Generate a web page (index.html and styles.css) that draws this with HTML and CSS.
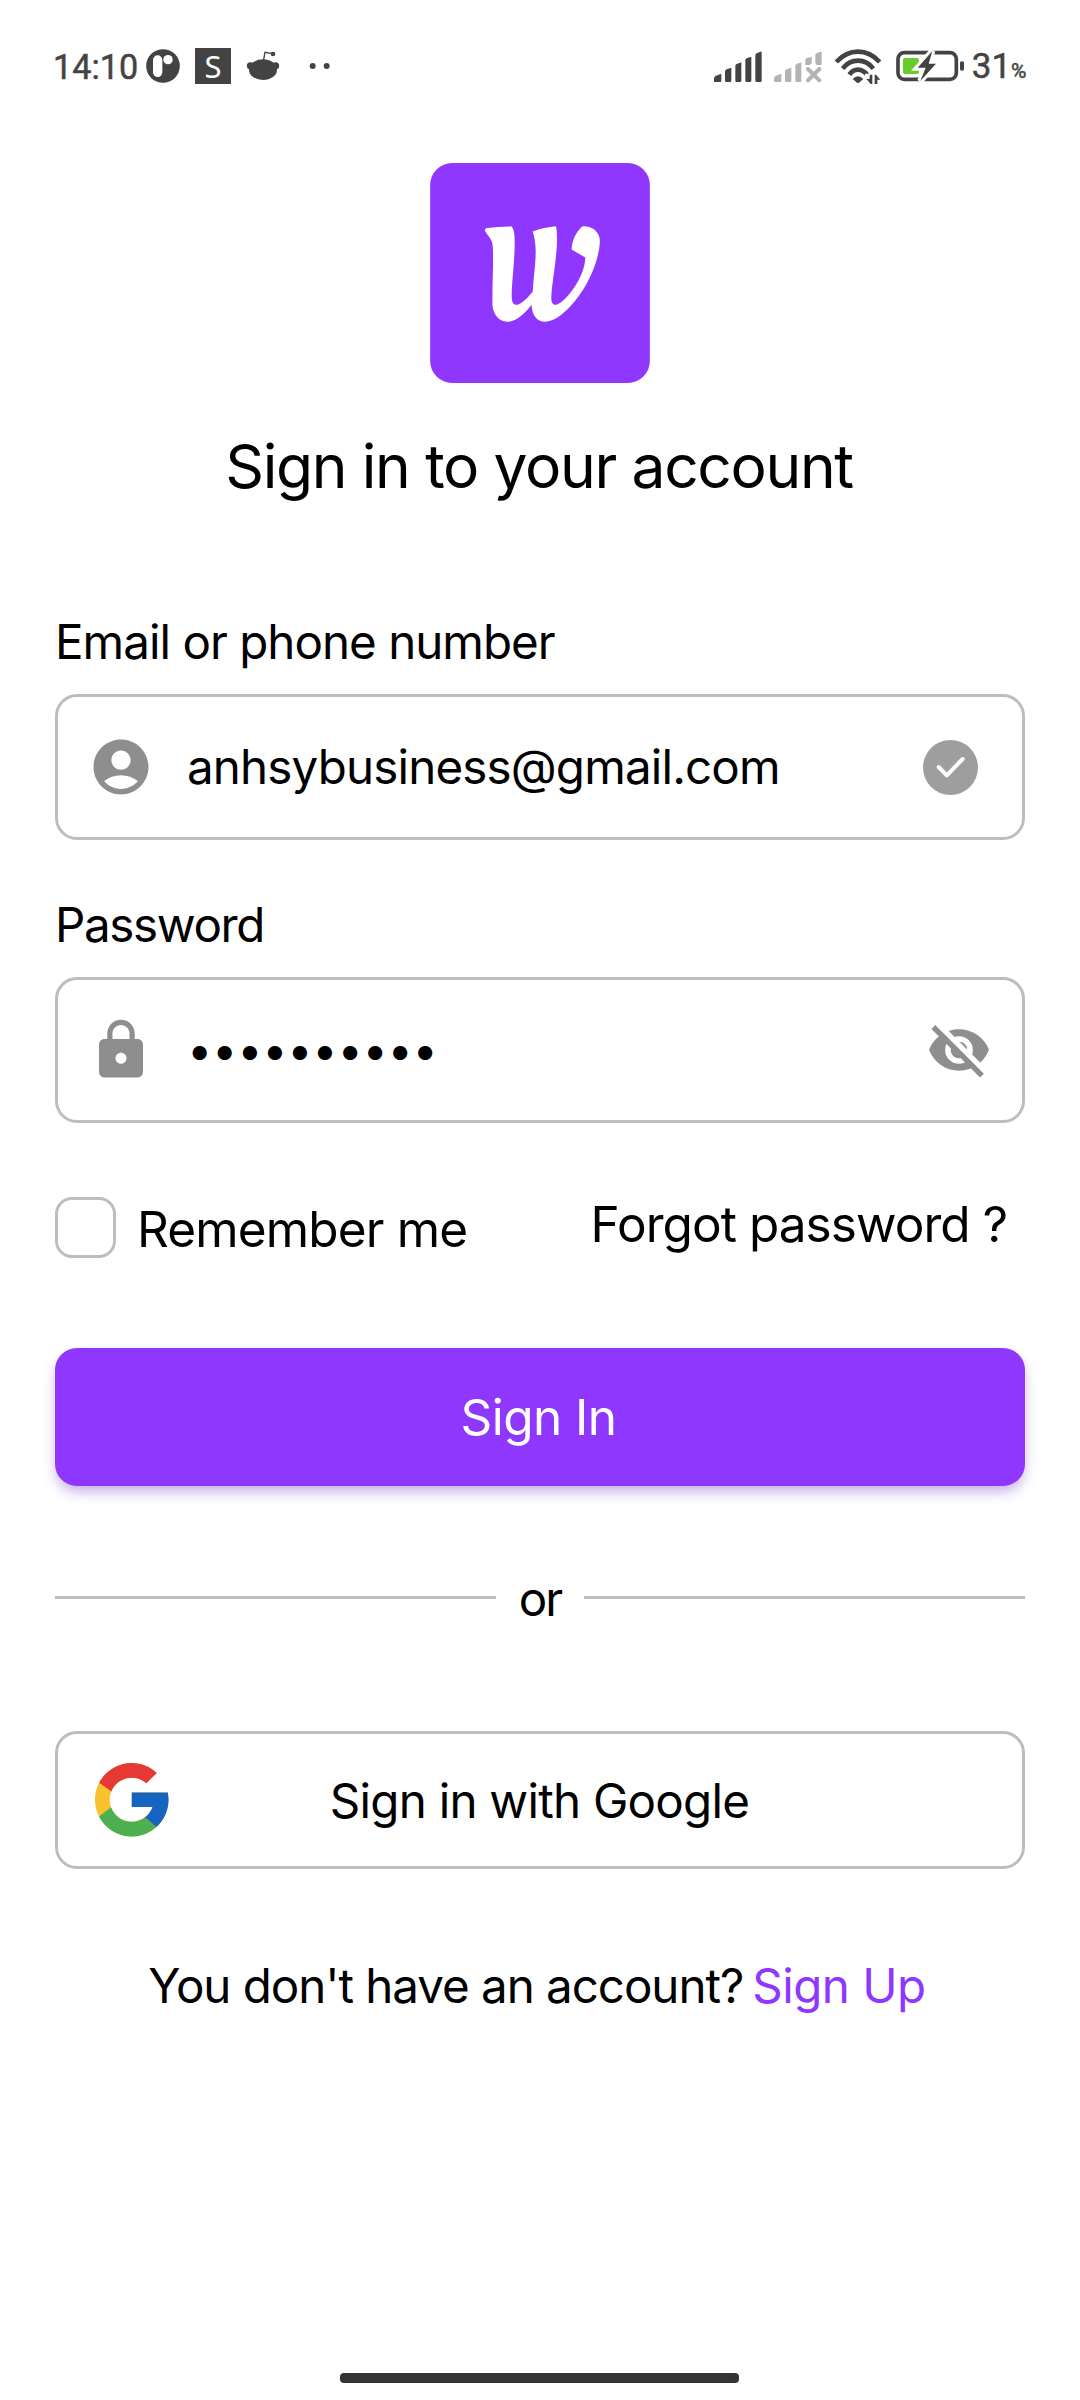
FILE: index.html
```html
<!DOCTYPE html>
<html lang="en">
<head>
<meta charset="utf-8">
<title>Sign in</title>
<link rel="stylesheet" href="styles.css">
</head>
<body>
<div class="screen">
  <header class="status">
    <span class="clock">14:10</span>
    <svg class="st-app" viewBox="318 51 102 120"><circle cx="369" cy="108" r="50.500"/><rect x="339" y="76" width="28" height="65" rx="14" fill="#fff"/><circle cx="384" cy="89" r="14" fill="#fff"/></svg>
    <span class="st-square">S</span>
    <svg class="st-reddit" viewBox="618 51 102 120"><ellipse cx="669" cy="119" rx="42" ry="31"/><circle cx="631" cy="107" r="10.500"/><circle cx="707" cy="107" r="10.500"/><path d="M670 94L675 67L697 71" fill="none" stroke="#434343" stroke-width="4"/><circle cx="699" cy="72" r="7"/></svg>
    <svg class="st-dots" viewBox="807 51 66 120"><circle cx="818" cy="108" r="9"/><circle cx="860" cy="108" r="9"/></svg>
    <div class="status-right">
      <svg class="st-signal" viewBox="45 51 144 120"><path d="M45 156V144Q46 140 51 137L67 131V152Q67 156 63 156ZM78 156V124Q79 120 83 118L97 113V152Q97 156 93 156H82Q78 156 78 152ZM109 152V108Q109 104 113 102L127 97V152Q127 156 123 156H113Q109 156 109 152ZM139 152V91Q139 87 143 85L157 80V152Q157 156 153 156H143Q139 156 139 152ZM169 152V76Q169 72 173 70L184 65Q188 64 188 68V152Q188 156 184 156H173Q169 156 169 152Z"/></svg>
      <svg class="st-signal st-nosim" viewBox="225 51 144 120"><path d="M225 152V144Q226 140 231 137L247 131V152Q247 156 243 156H229Q225 156 225 152ZM258 152V124Q259 120 263 118L277 113V152Q277 156 273 156H262Q258 156 258 152ZM289 152V108Q289 104 293 102L307 97V152Q307 156 303 156H293Q289 156 289 152ZM319 105V91Q319 87 323 85L338 80V100L332 105ZM349 100V76Q349 72 353 70L364 65Q368 64 368 68V105H354Z"/><path d="M327 117L361 151M361 117L327 151" fill="none" stroke="#b3b3b3" stroke-width="12" stroke-linecap="round"/></svg>
      <svg class="st-wifi" viewBox="405 51 144 120"><g fill="none" stroke="#434343" stroke-width="14"><path d="M412 96Q440 65 477 65T542 96"/><path d="M431 116Q449 92 477 92T523 116"/><path d="M451 134Q461 119 477 119T506 136"/></g><path d="M461 147Q477 131 493 147L480 158Q477 160 474 158Z"/><path d="M498 131H549V164H498Z" fill="#fff"/><path d="M512 134H520V162H515L502 147H512ZM527 162V134H531L544 149H535V162Z"/></svg>
      <svg class="st-battery" viewBox="588 51 210 120"><rect x="597" y="68" width="175" height="80" rx="19" fill="none" stroke="#434343" stroke-width="11"/><rect x="783" y="94" width="12" height="28" rx="5"/><rect x="612" y="84" width="48" height="48" rx="6" fill="#66cc29"/><path d="M700 63L656 113H680L664 153L711 101H689Z" fill="#fff" stroke="#fff" stroke-width="18"/><path d="M700 63L656 113H680L664 153L711 101H689Z"/></svg>
      <span class="level">31</span><span class="percent">%</span>
    </div>
  </header>

  <main class="page">
    <svg class="logo" viewBox="0 0 660 661"><rect width="660" height="661" rx="66" fill="#8f36ff"/><path transform="translate(-30 -39)" fill="#fff" d="M197 235Q235 230 275 230C283 240 284 260 284 280C284 330 275 400 275 440C275 460 282 465 290 465C303 465 322 445 338 426C342 370 347 340 347 305C347 280 343 260 338 245C360 235 385 231 408 229C411 240 411 260 411 275C410 330 394 410 394 445C394 460 400 465 407 465C430 465 496 385 496 323L455 299C456 270 470 243 488 229C515 227 540 245 540 273C535 385 435 516 375 516C350 516 335 495 335 465C315 490 290 516 261 516C235 516 217 490 217 462C217 400 219 370 219 320C219 290 218 280 213 270C207 260 200 252 194 242Z"/></svg>
    <h1 class="title">Sign in to your account</h1>

    <label class="label email-label">Email or phone number</label>
    <div class="field">
      <svg class="field-icon" viewBox="0 0 24 24"><path fill-rule="evenodd" d="M12 2C6.480 2 2 6.480 2 12s4.480 10 10 10 10-4.480 10-10S17.520 2 12 2zm0 4c1.930 0 3.500 1.570 3.500 3.500S13.930 13 12 13s-3.500-1.570-3.500-3.500S10.070 6 12 6zm0 14c-2.030 0-4.430-.820-6.140-2.880C7.550 15.800 9.680 15 12 15s4.450.800 6.140 2.120C16.430 19.180 14.030 20 12 20z"/></svg>
      <span class="value">anhsybusiness@gmail.com</span>
      <svg class="check" viewBox="1089 209 165 165"><circle cx="1171.500" cy="291.500" r="82.500"/><path d="M1136 290L1160.500 315L1208 266" fill="none" stroke="#fff" stroke-width="12" stroke-linecap="round" stroke-linejoin="round"/></svg>
    </div>

    <label class="label password-label">Password</label>
    <div class="field">
      <svg class="field-icon" viewBox="0 0 24 24"><path fill-rule="evenodd" d="M18 8h-1V6c0-2.760-2.240-5-5-5S7 3.240 7 6v2H6c-1.100 0-2 .900-2 2v10c0 1.100.900 2 2 2h12c1.100 0 2-.900 2-2V10c0-1.100-.900-2-2-2zm-6 9c-1.100 0-2-.900-2-2s.900-2 2-2 2 .900 2 2-.900 2-2 2zm3.100-9H8.900V6c0-1.710 1.390-3.100 3.100-3.100s3.100 1.390 3.100 3.100v2z"/></svg>
      <span class="value dots">••••••••••</span>
      <svg class="eye" viewBox="1104 186 186 168"><path d="M1107 269C1122 232 1157 208 1197 208S1272 232 1287 269C1272 307 1237 332 1197 332S1122 307 1107 269Z"/><circle cx="1197" cy="270" r="41.500" fill="#fff"/><circle cx="1197" cy="270" r="25"/><path d="M1128 187L1277 336" stroke="#fff" stroke-width="17"/><path d="M1120 201L1266 347" stroke="#8e8e8e" stroke-width="16"/></svg>
    </div>

    <div class="options">
      <span class="checkbox"></span>
      <span class="remember">Remember me</span>
      <a class="forgot">Forgot password ?</a>
    </div>

    <button class="submit">Sign In</button>

    <div class="divider"><i class="rule"></i><span>or</span><i class="rule"></i></div>

    <button class="google">
      <svg class="g-logo" viewBox="4 4 40 40"><path fill="#fbc02d" d="M43.611 20.083H42V20H24v8h11.303c-1.649 4.657-6.080 8-11.303 8-6.627 0-12-5.373-12-12s5.373-12 12-12c3.059 0 5.842 1.154 7.961 3.039l5.657-5.657C34.046 6.053 29.268 4 24 4 12.955 4 4 12.955 4 24s8.955 20 20 20 20-8.955 20-20c0-1.341-.138-2.650-.389-3.917z"/><path fill="#e53935" d="M6.306 14.691l6.571 4.819C14.655 15.108 18.961 12 24 12c3.059 0 5.842 1.154 7.961 3.039l5.657-5.657C34.046 6.053 29.268 4 24 4 16.318 4 9.656 8.337 6.306 14.691z"/><path fill="#4caf50" d="M24 44c5.166 0 9.860-1.977 13.409-5.192l-6.190-5.238C29.211 35.091 26.715 36 24 36c-5.202 0-9.619-3.317-11.283-7.946l-6.522 5.025C9.505 39.556 16.227 44 24 44z"/><path fill="#1565c0" d="M43.611 20.083H24V28h11.303c-.792 2.237-2.231 4.166-4.087 5.571l6.190 5.238C36.971 39.205 44 34 44 24c0-1.341-.138-2.650-.389-3.917z"/></svg>
      <span>Sign in with Google</span>
    </button>

    <p class="signup"><span class="question">You don't have an account?</span><a class="signup-link">Sign Up</a></p>
  </main>
  <div class="home-bar"></div>
</div>
</body>
</html>
```
FILE: styles.css
```css
* { box-sizing: border-box; }
body { margin: 0; background: #fff; }
svg { display: block; flex: none; }

.screen {
  width: 1080px;
  height: 2400px;
  display: flex;
  flex-direction: column;
  background: #fff;
  color: #000;
  font-family: "Inter", sans-serif;
  white-space: nowrap;
  overflow: hidden;
}

/* Status bar */
.status {
  display: flex;
  align-items: flex-start;
  height: 163px;
  padding: 47px 53.5px 0 53px;
  font-family: "Roboto", sans-serif;
  color: #434343;
  fill: #434343;
  line-height: 40px;
  -webkit-text-stroke: .5px #434343;
}
.status svg { height: 40px; }
.clock { width: 93px; font-size: 34.2px; }
.st-app { width: 34px; }
.st-square {
  width: 36px;
  height: 36px;
  margin: 1px 15px 0;
  background: #434343;
  color: #fff;
  font: 400 31px/36px "Noto Sans", sans-serif;
  text-align: center;
  -webkit-text-stroke: 0;
}
.st-reddit { width: 34px; }
.st-dots { width: 22px; margin-left: 29px; }
.status-right { display: flex; margin-left: auto; }
.st-signal { width: 48px; margin-right: 12px; }
.st-nosim { fill: #b3b3b3; }
.st-wifi { width: 48px; margin-right: 13px; }
.st-battery { width: 70px; margin-right: 6.5px; }
.level { font-size: 35px; }
.percent { font-size: 21px; line-height: 49px; }

/* Form */
.page {
  flex: 1;
  display: flex;
  flex-direction: column;
  padding: 0 55px;
}
.logo { width: 220px; height: 220px; align-self: center; }
.title {
  margin: 46px 2px 110px 0;
  text-align: center;
  font-size: 60.5px;
  font-weight: 400;
  line-height: 74px;
  letter-spacing: -1.35px;
}
.label { font-size: 47.5px; line-height: 58px; letter-spacing: -.97px; }
.password-label { margin-top: 56px; letter-spacing: -1.35px; }
.field {
  display: flex;
  align-items: center;
  height: 146px;
  margin-top: 23px;
  padding: 0 32px 0 30px;
  border: 3px solid #bdbdbd;
  border-radius: 22px;
  fill: #8e8e8e;
}
.field-icon { width: 66px; height: 66px; }
.value {
  flex: 1;
  margin-left: 33px;
  padding-bottom: 2px;
  font-size: 47.5px;
  letter-spacing: -.82px;
}
.dots { font-size: 45px; letter-spacing: -.25px; }
.check { width: 55px; height: 55px; margin-right: 12px; fill: #9e9e9e; }
.eye { width: 62px; height: 56px; }

.options {
  display: flex;
  align-items: flex-start;
  height: 61px;
  margin-top: 74px;
  font-size: 49.5px;
  line-height: 60px;
}
.checkbox {
  width: 61px;
  height: 61px;
  border: 3px solid #bdbdbd;
  border-radius: 17px;
}
.remember { margin: 2px 0 0 21px; letter-spacing: -.85px; }
.forgot { margin: -3px 18px 0 auto; letter-spacing: -.94px; }

button {
  display: flex;
  align-items: center;
  height: 138px;
  border-radius: 22px;
  font-family: inherit;
}
.submit {
  justify-content: center;
  margin-top: 90px;
  padding: 0 3px 0 0;
  border: 0;
  background: #8f36ff;
  box-shadow: 0 7px 14px -2px rgba(90, 30, 190, .38);
  color: #fff;
  font-size: 49.5px;
  letter-spacing: -.55px;
}
.divider {
  display: flex;
  align-items: center;
  justify-content: space-between;
  margin: 84px 0 103px;
  font-size: 47.5px;
  line-height: 58px;
  letter-spacing: -2px;
}
.rule { width: 441px; height: 3px; margin-bottom: 3px; background: #bdbdbd; }
.google {
  display: grid;
  grid-template-columns: 73px 1fr 73px;
  padding: 0 38px 0 37px;
  border: 3px solid #bdbdbd;
  background: #fff;
  color: #000;
  font-size: 47.5px;
  letter-spacing: -.75px;
}
.g-logo { width: 73.5px; height: 73.5px; }
.signup {
  display: flex;
  justify-content: center;
  gap: 9px;
  margin: 88px 6px 0 0;
  font-size: 47.5px;
  line-height: 58px;
}
.question { letter-spacing: -1.03px; }
.signup-link { color: #8f36ff; letter-spacing: -.5px; }

.home-bar {
  width: 399px;
  height: 10px;
  margin: 0 0 17px 340px;
  border-radius: 4px;
  background: #333;
}
```
